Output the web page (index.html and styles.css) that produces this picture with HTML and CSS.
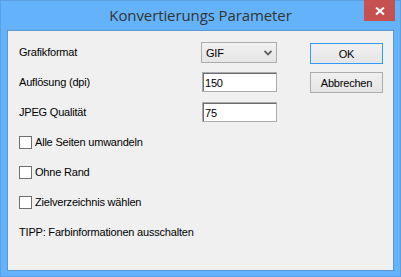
FILE: index.html
```
<!DOCTYPE html>
<html lang="de">
<head>
  <meta charset="UTF-8" />
  <meta name="viewport" content="width=device-width, initial-scale=1.0" />
  <title>Konvertierungs Parameter</title>
  <link rel="stylesheet" href="styles.css">
</head>
<body>
  <div class="window">
    <div class="titlebar">
      <span class="title">Konvertierungs Parameter</span>
      <button class="close-btn" aria-label="Schließen">
        <svg width="10" height="8" viewBox="0 0 10 8">
          <path d="M1 0.5 L9 7.5 M9 0.5 L1 7.5" stroke="#fff" stroke-width="2" fill="none" />
        </svg>
      </button>
    </div>

    <div class="client">
      <div class="form">
        <label class="label">Grafikformat</label>
        <div class="combo">
          <span>GIF</span>
          <svg width="8" height="6" viewBox="0 0 8 6">
            <path d="M0.5 1 L4 4.5 L7.5 1" stroke="#606060" stroke-width="1.8" fill="none" />
          </svg>
        </div>
        <button class="btn btn-default">OK</button>

        <label class="label">Auflösung (dpi)</label>
        <input class="edit" type="text" value="150">
        <button class="btn">Abbrechen</button>

        <label class="label">JPEG Qualität</label>
        <input class="edit" type="text" value="75">
      </div>

      <div class="options">
        <label class="check"><span class="box"></span>Alle Seiten umwandeln</label>
        <label class="check"><span class="box"></span>Ohne Rand</label>
        <label class="check"><span class="box"></span>Zielverzeichnis wählen</label>
        <div class="tip">TIPP: Farbinformationen ausschalten</div>
      </div>
    </div>
  </div>
</body>
</html>
```

FILE: styles.css
```
body {
  margin: 0;
  padding: 0;
  font-family: 'Liberation Sans', Arial, sans-serif;
  font-size: 11px;
  letter-spacing: -0.2px;
  color: #000;
}
.window {
  width: 401px;
  height: 277px;
  box-sizing: border-box;
  background: #64b3fa;
  border: 1px solid #5aa0e2;
  display: flex;
  flex-direction: column;
}
.titlebar {
  height: 29px;
  position: relative;
  display: flex;
  justify-content: center;
  align-items: flex-start;
}
.title {
  font-family: 'Open Sans', 'Noto Sans', sans-serif;
  font-size: 15px;
  letter-spacing: -0.1px;
  color: #333;
  margin-top: 4px;
}
.close-btn {
  position: absolute;
  top: -1px;
  right: 5px;
  width: 31px;
  height: 21px;
  border: none;
  padding: 0;
  background: #c75050;
  display: flex;
  justify-content: center;
  align-items: center;
}
.client {
  margin: 0 6px 0 6px;
  height: 241px;
  box-sizing: border-box;
  background: #f0f0f0;
  border: 1px solid #5896d4;
}
.form {
  display: grid;
  grid-template-columns: 149px 76px 73px;
  grid-auto-rows: 20px;
  column-gap: 33px;
  row-gap: 10px;
  padding: 11px 0 0 11px;
  align-items: center;
}
.label {
  white-space: nowrap;
}
.combo {
  height: 21px;
  box-sizing: border-box;
  border: 1px solid #acacac;
  background: linear-gradient(#f2f2f2, #e5e5e5);
  display: flex;
  align-items: center;
  justify-content: space-between;
  padding: 0 4px 0 4px;
  align-self: start;
}
.edit {
  height: 20px;
  box-sizing: border-box;
  border: 1px solid #ababab;
  box-shadow: inset 1px 1px 0 #6d6d6d;
  background: #fff;
  font-family: inherit;
  font-size: 11px;
  letter-spacing: inherit;
  padding: 1px 0 0 2px;
  margin: 0 0 0 1px;
  width: 75px;
  outline: none;
}
.btn {
  height: 21px;
  box-sizing: border-box;
  border: 1px solid #acacac;
  background: linear-gradient(#f0f0f0, #e5e5e5);
  font-family: inherit;
  font-size: 11px;
  letter-spacing: inherit;
  color: #000;
  padding: 0;
  align-self: start;
}
.btn-default {
  border-color: #3399ff;
  margin-top: 1px;
}
.options {
  display: flex;
  flex-direction: column;
  margin-top: 5px;
  padding-left: 11px;
}
.check, .tip {
  height: 30px;
  display: flex;
  align-items: center;
  white-space: nowrap;
}
.box {
  width: 13px;
  height: 13px;
  box-sizing: border-box;
  border: 1px solid #707070;
  background: #fff;
  margin-right: 3px;
}
```
